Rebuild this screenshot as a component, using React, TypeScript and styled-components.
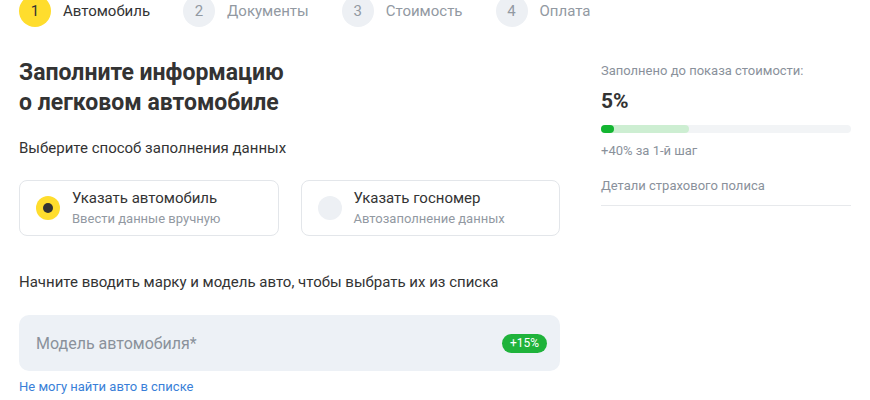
import React, { FC } from "react";
import styled, { createGlobalStyle } from "styled-components";

const GlobalStyle = createGlobalStyle`
  html, body {
    margin: 0;
    padding: 0;
    background: #ffffff;
    font-family: Roboto, "Noto Sans", sans-serif;
    color: #333333;
  }
`;

const Page = styled.div`
  width: 870px;
  height: 400px;
  overflow: hidden;
  box-sizing: border-box;
  padding-left: 19px;
`;

const Stepper = styled.div`
  display: flex;
  align-items: center;
  gap: 33px;
  margin-top: -5px;
  height: 32px;
`;

const Step = styled.div`
  display: flex;
  align-items: center;
  gap: 12px;
`;

const StepNum = styled.div<{ $active?: boolean }>`
  width: 32px;
  height: 32px;
  border-radius: 50%;
  display: flex;
  align-items: center;
  justify-content: center;
  font-size: 15px;
  background: ${(p) => (p.$active ? "#ffdd2d" : "#edf0f4")};
  color: ${(p) => (p.$active ? "#333333" : "#9299a2")};
`;

const StepLabel = styled.span<{ $active?: boolean }>`
  font-size: 15px;
  color: ${(p) => (p.$active ? "#333333" : "#9299a2")};
`;

const Body = styled.div`
  display: flex;
  gap: 41px;
  margin-top: 31px;
`;

const Main = styled.div`
  width: 541px;
  display: flex;
  flex-direction: column;
`;

const Title = styled.h1`
  margin: 0;
  font-size: 23px;
  line-height: 30px;
  font-weight: 700;
  color: #333333;
`;

const Text = styled.p<{ $top?: number }>`
  margin: ${(p) => p.$top ?? 0}px 0 0;
  font-size: 15px;
  line-height: 20px;
  color: #333333;
`;

const Cards = styled.div`
  display: grid;
  grid-template-columns: 1fr 1fr;
  gap: 22px;
  margin: 22px 0 36px;
`;

const Card = styled.div`
  height: 56px;
  box-sizing: border-box;
  border: 1px solid #e3e6ea;
  border-radius: 8px;
  display: flex;
  align-items: center;
  gap: 12px;
  padding-left: 16px;
`;

const Radio = styled.div<{ $checked?: boolean }>`
  width: 24px;
  height: 24px;
  border-radius: 50%;
  flex-shrink: 0;
  background: ${(p) => (p.$checked ? "#ffdd2d" : "#edf0f4")};
  display: flex;
  align-items: center;
  justify-content: center;
  &::after {
    content: "";
    display: ${(p) => (p.$checked ? "block" : "none")};
    width: 10px;
    height: 10px;
    border-radius: 50%;
    background: #333333;
  }
`;

const CardText = styled.div`
  display: flex;
  flex-direction: column;
  gap: 2px;
`;

const CardTitle = styled.span`
  font-size: 15px;
  line-height: 19px;
  color: #333333;
`;

const CardSub = styled.span`
  font-size: 13px;
  line-height: 17px;
  color: #9299a2;
`;

const Field = styled.div`
  margin-top: 23px;
  height: 56px;
  border-radius: 10px;
  background: #edf1f6;
  display: flex;
  align-items: center;
  justify-content: space-between;
  padding: 0 13px 0 17px;
`;

const Placeholder = styled.span`
  font-size: 16px;
  color: #8a919b;
`;

const Badge = styled.span`
  background: #1fb33b;
  color: #ffffff;
  font-size: 12px;
  line-height: 19px;
  padding: 0 8px;
  border-radius: 10px;
`;

const Link = styled.a`
  margin-top: 8px;
  font-size: 13px;
  color: #3a7fd8;
  text-decoration: none;
`;

const Side = styled.div`
  width: 250px;
  padding-top: 4px;
  display: flex;
  flex-direction: column;
`;

const SideLabel = styled.span<{ $top?: number }>`
  margin-top: ${(p) => p.$top ?? 0}px;
  font-size: 13px;
  line-height: 18px;
  color: #8a919b;
`;

const Percent = styled.span`
  margin-top: 9px;
  font-size: 21px;
  line-height: 24px;
  font-weight: 700;
  color: #333333;
`;

const Track = styled.div`
  margin-top: 12px;
  height: 8px;
  border-radius: 4px;
  background: #f2f4f6;
  display: flex;
`;

const Fill = styled.div`
  height: 8px;
  border-radius: 4px;
  background: #cdeed2;
  display: flex;
`;

const Dot = styled.div`
  width: 13px;
  height: 8px;
  border-radius: 4px;
  background: #13b531;
`;

const Divider = styled.div`
  margin-top: 10px;
  height: 1px;
  background: #e7e9ec;
`;

const steps = ["Автомобиль", "Документы", "Стоимость", "Оплата"];

export const App: FC = () => {
  return (
    <Page>
      <GlobalStyle />
      <Stepper>
        {steps.map((s, i) => (
          <Step key={s}>
            <StepNum $active={i === 0}>{i + 1}</StepNum>
            <StepLabel $active={i === 0}>{s}</StepLabel>
          </Step>
        ))}
      </Stepper>
      <Body>
        <Main>
          <Title>
            Заполните информацию
            <br />о легковом автомобиле
          </Title>
          <Text $top={20}>Выберите способ заполнения данных</Text>
          <Cards>
            <Card>
              <Radio $checked />
              <CardText>
                <CardTitle>Указать автомобиль</CardTitle>
                <CardSub>Ввести данные вручную</CardSub>
              </CardText>
            </Card>
            <Card>
              <Radio />
              <CardText>
                <CardTitle>Указать госномер</CardTitle>
                <CardSub>Автозаполнение данных</CardSub>
              </CardText>
            </Card>
          </Cards>
          <Text>Начните вводить марку и модель авто, чтобы выбрать их из списка</Text>
          <Field>
            <Placeholder>Модель автомобиля*</Placeholder>
            <Badge>+15%</Badge>
          </Field>
          <Link href="#">Не могу найти авто в списке</Link>
        </Main>
        <Side>
          <SideLabel>Заполнено до показа стоимости:</SideLabel>
          <Percent>5%</Percent>
          <Track>
            <Fill style={{ width: "35%" }}>
              <Dot />
            </Fill>
          </Track>
          <SideLabel $top={9}>+40% за 1-й шаг</SideLabel>
          <SideLabel $top={17}>Детали страхового полиса</SideLabel>
          <Divider />
        </Side>
      </Body>
    </Page>
  );
};

export default App;
